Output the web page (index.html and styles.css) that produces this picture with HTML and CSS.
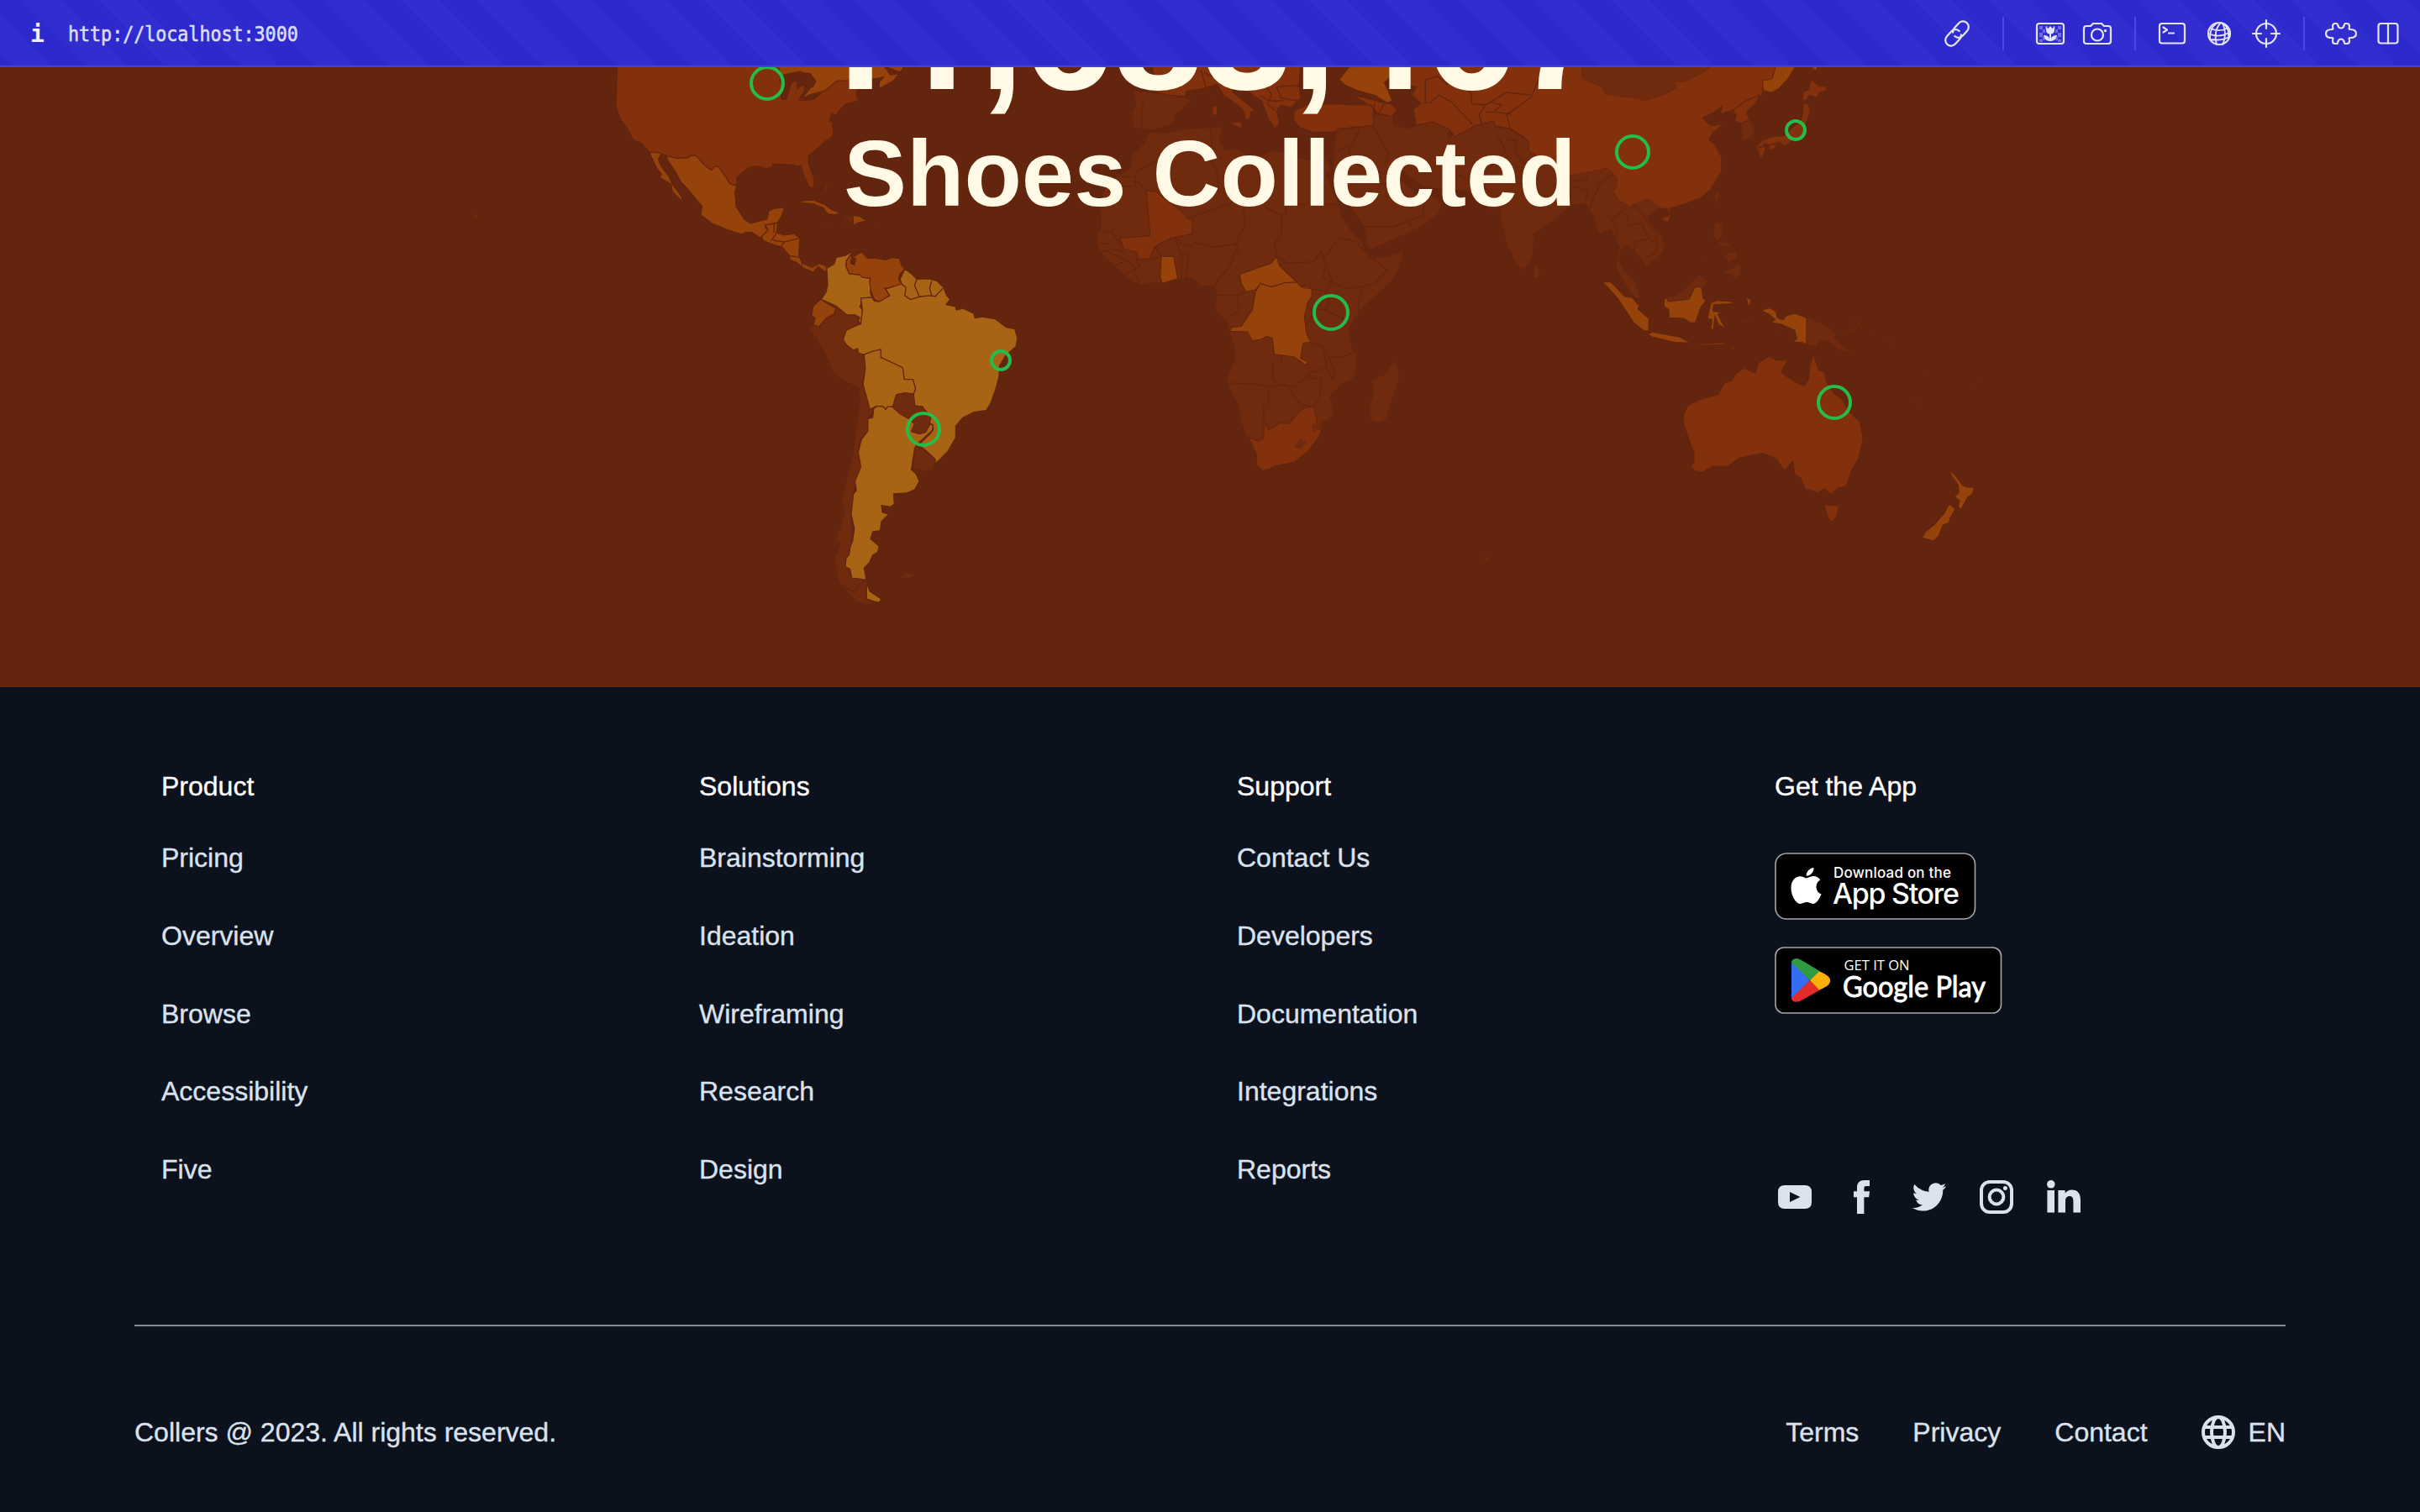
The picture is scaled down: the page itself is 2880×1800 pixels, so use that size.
FILE: index.html
```html
<!DOCTYPE html>
<html lang="en">
<head>
<meta charset="utf-8">
<title>Collers</title>
<link rel="stylesheet" href="styles.css">
</head>
<body>
<header class="bar">
  <span class="bar-info">i</span>
  <span class="bar-url">http://localhost:3000</span>
  <div class="bar-tools">
    <svg class="tool" viewBox="0 0 40 40"><g transform="rotate(42 20 20)"><path d="M15.500 22.300a6.800 6.800 0 0 1-2.300-5V9.500a6.800 6.800 0 0 1 13.600 0v7.800a6.800 6.800 0 0 1-6.800 6.800"/><path d="M24.500 17.700a6.800 6.800 0 0 1 2.300 5v7.800a6.800 6.800 0 0 1-13.600 0v-7.800a6.800 6.800 0 0 1 6.800-6.800"/></g></svg>
    <i class="sep sep-wide"></i>
    <svg class="tool" viewBox="0 0 40 40"><g class="checks"><path d="M7 11h4v4H7zM11 15h3v4h-3zM7 19h4v5H7zM11 24h3v4h-3zM14 11h3v4h-3zM7 27h4v3H7zM29 11h4v4h-4zM26 15h3v4h-3zM29 19h4v5h-4zM26 24h3v4h-3zM23 11h3v3h-3zM29 27h4v3h-4z"/></g><rect x="4" y="8" width="32" height="24" rx="3"/><path class="solid" d="M15 12l2.500 2 2.500-3 2.500 3 2.500-2v4c0 3-2 4-4 4.500V26c1-3 3-4 7-4-1 4-3 7-8 7s-7-3-8-7c4 0 6 1 7 4v-5.500c-2-.5-4-1.500-4-4.500z"/></svg>
    <svg class="tool" viewBox="0 0 40 40"><path d="M7 11h5l3-3h10l3 3h5q3 0 3 3v15q0 3-3 3H7q-3 0-3-3V14q0-3 3-3z"/><circle cx="20" cy="21.500" r="7"/><circle class="solid" cx="29.500" cy="16.500" r="1.700"/></svg>
    <i class="sep"></i>
    <svg class="tool" viewBox="0 0 40 40"><rect x="5" y="8" width="30" height="23.500" rx="3"/><path d="M9.500 12.500l4.500 3-4.500 3M16 19.500h6"/></svg>
    <svg class="tool" viewBox="0 0 40 40"><circle cx="20" cy="20" r="13"/><path class="thin" d="M22 7c-6 6-8 16-5 26M23 7c5 6 5 18 1 26M19 7c-8 3-10 10-10 19M25 8c6 5 7 11 6 17M10 14c7 3 14 3 20-1M7 20c9 4 18 3 26-2M9 27c8 1 16 1 23-3"/></svg>
    <svg class="tool" viewBox="0 0 40 40"><circle cx="20" cy="20" r="12"/><path d="M20 4v10M20 26v10M4 20h10M26 20h10"/></svg>
    <i class="sep"></i>
    <svg class="tool" viewBox="0 0 40 40"><path d="M10 11.500c0-2 1-3.500 3-3.500h2c2 0 0 5.500 5 5.500S23 8 25 8h2c2 0 3 1.500 3 3.500S28.500 15 31 15s7 0 7 5-4.500 5-7 5-1 1.500-1 3.500-1 3.500-3 3.500h-2c-2 0 0-5.500-5-5.500S17 32 15 32h-2c-2 0-3-1.500-3-3.500S11.500 25 9 25s-7 0-7-5 4.500-5 7-5 1-1.500 1-3.500z"/></svg>
    <svg class="tool" viewBox="0 0 40 40"><rect x="8.500" y="8" width="23" height="23.500" rx="3"/><path d="M20 8v23.500"/></svg>
  </div>
</header>

<section class="hero">
  <svg class="map" viewBox="0 80 2880 738">
    <path class="dark" d="M562 256l4-1 3 3-3 2zM1766 662l6 2 2 4-6-1z"/>
    <g transform="translate(700 70) scale(.38265 .43367)">
      <path class="mid" d="M90 20L88 80 86 130 100 165 120 190 140 222 165 232 190 255 250 268 275 273 312 272 316 266 335 266 362 292 383 306 395 295 405 296 432 330 440 343 462 349 463 325 500 298 530 294 550 301 570 299 574 289 635 290 650 296 662 293 670 320 686 350 698 357 703 348 703 328 686 290 685 268 705 252 740 225 758 215 763 205 760 180 765 165 778 145 800 125 845 113 835 105 836 85 838 60 820 20Z"/>
      <path class="orange" d="M590 20H984L950 60 905 82 905 60 885 55 838 60 775 60 760 70 735 88 695 97 665 108 690 80 705 60 690 45 660 35 600 45Z"/>
      <path class="sea" d="M600 48L640 38 690 40 708 62 700 75 690 80 665 105 655 112 675 85 670 70 650 82 650 60 632 65 615 112 600 110 602 80 612 58 595 62ZM920 20L980 40 940 44ZM885 56L920 50 900 68ZM658 115L690 100 725 95 700 112ZM750 170L758 150 770 155 764 175Z"/>
      <path class="orange" d="M190 256L218 258 250 268 275 273 312 272 316 266 335 266 362 292 383 306 395 295 405 296 432 330 440 343 462 349 456 365 460 405 485 440 505 452 530 446 556 440 562 418 578 411 610 408 600 435 588 450 551 456 551 463 560 470 540 487 535 492 510 477 490 476 477 482 430 468 385 452 350 428 354 405 310 358 290 340 268 305 248 280 243 267 225 264 218 275 225 292 250 322 262 345 280 365 293 383 288 388 262 365 258 345 222 325 228 318 212 298Z"/>
      <path class="orange" d="M540 487L560 470 551 456 580 453 590 450 585 478 610 484 640 480 658 492 655 540 665 560 695 573 720 562 738 568 744 580 735 584 715 570 700 586 668 574 650 560 628 552 625 540 605 518 570 508 542 498Z"/>
      <path class="line" d="M578 453V478M585 480L568 500M575 498L610 503 658 492M600 515L612 500M625 540L655 545M665 558V574"/>
      <path class="orange" d="M640 402L665 390 700 388 735 400 755 413 785 424 770 428 745 426 730 408 700 398 665 395ZM823 430L845 433 866 445 840 450 825 457Z"/>
      <path class="dark" d="M790 432L822 432V450L785 448 815 446ZM730 448L758 452 740 455ZM885 449L903 450 890 452ZM735 340L748 345 735 375ZM720 338L730 338 722 343Z"/>
      <path class="dark" d="M720 735L740 710 770 690 772 680 805 703 840 705 848 728 835 732 803 745 793 770 803 785 838 795 840 808 858 812 862 850 855 895 845 905 800 885 760 858 740 815 710 765 690 750 688 735 700 728Z"/>
      <path class="dark" d="M843 905L858 895 876 963 888 965 870 988 870 1022 845 1045 840 1080 848 1120 834 1160 825 1195 818 1250 822 1300 812 1360 800 1372 814 1400 820 1425 865 1430 865 1482 885 1490 865 1500 830 1485 785 1445 775 1420 768 1370 785 1330 770 1322 785 1285 798 1250 790 1210 805 1150 825 1080 835 1000 845 945Z"/>
      <path class="gold" d="M742 575L765 563 772 545 800 540 827 526 818 535 803 555 802 570 812 590 845 593 852 600 878 602 875 612 880 625 877 640 882 655 848 657 849 672 845 680 853 690 848 728 840 720 845 710 830 703 805 703 770 678 725 660 740 640 745 620Z"/>
      <path class="orange" d="M803 555L815 540 830 541 850 530 870 548 890 547 925 552 945 546 968 548 975 568 985 577 970 590 965 605 975 618 960 627 922 630 938 650 920 660 905 667 890 660 880 640 875 612 878 602 852 600 845 593 812 590 802 570Z"/>
      <path class="sea" d="M820 540L832 550 828 566 816 562Z"/>
      <path class="gold" d="M985 577L1005 590 1022 605 1060 604 1085 610 1105 628 1115 650 1125 660 1113 675 1142 680 1145 690 1165 685 1200 700 1203 712 1225 708 1265 714 1300 737 1327 742 1335 768 1330 790 1300 812 1278 845 1278 870 1268 905 1252 945 1238 965 1200 970 1165 985 1143 1008 1143 1040 1118 1078 1090 1103 1078 1112 1080 1100 1050 1075 1028 1060 1065 1028 1073 1018 1072 1005 1062 1000 1066 980 1048 965 1040 955 1016 952 1012 920 1018 905 1010 880 983 880 978 848 940 832 910 820 910 798 885 803 858 812 840 808 838 795 825 800 803 785 793 770 803 745 835 732 848 728 853 690 848 657 882 655 890 665 905 667 938 650 925 632 975 618 970 605Z"/>
      <path class="line" d="M975 618L988 628 985 650 1003 661 1030 653 1060 650 1080 652 1103 630M1022 605L1015 622 1030 653M1068 610L1062 630 1068 650"/>
      <path class="gold" d="M858 812L885 803 910 798 910 820 940 832 978 848 983 880 1010 880 1018 905 1012 920 985 917 958 922 948 953 925 963 918 955 892 955 876 963 865 925 855 895 862 850Z"/>
      <path class="dark" d="M958 922L985 917 1012 920 1016 952 1040 955 1048 968 1066 980 1062 1005 1050 1025 1030 1030 1005 1023 1015 1003 1000 990 970 975 948 955Z"/>
      <path class="gold" d="M888 960L900 953 918 955 925 963 930 955 945 955 970 975 1000 990 1015 1003 1005 1023 1030 1030 1050 1025 1063 1003 1073 1006 1070 1020 1025 1056 1015 1070 1005 1128 1020 1140 1030 1160 1015 1183 990 1192 950 1194 952 1222 940 1230 912 1226 915 1245 935 1250 912 1270 908 1295 885 1298 878 1318 905 1338 900 1355 885 1362 875 1382 858 1398 865 1430 820 1425 814 1400 800 1395 802 1372 812 1360 815 1340 822 1325 828 1290 818 1250 825 1195 834 1185 830 1160 848 1120 840 1080 850 1045 870 1022 870 988 885 985Z"/>
      <path class="dark" d="M1018 1062L1040 1072 1082 1102 1070 1125 1045 1132 1010 1125Z"/>
      <path class="orange" d="M700 680L722 660 770 685 765 700 740 712 718 735 700 730 706 712 695 705Z"/>
      <path class="gold" d="M866 1440L876 1462 912 1483 905 1492 890 1490 866 1482Z"/>
      <path class="line" d="M785 1445L830 1465 835 1450 865 1432"/>
      <path class="dark" d="M970 1425L985 1412 1015 1415 1000 1424Z"/>
    </g>
    <g transform="translate(1280 70) scale(.38265 .33333)">
      <path class="dark" d="M228 262L285 265 340 250 440 245 460 240 455 262 445 290 465 325 500 322 540 350 580 345 610 330 650 335 680 350 720 362 775 355 785 370 795 400 780 410 800 470 820 520 825 560 860 620 890 655 905 690 925 712 960 708 1020 690 1010 740 985 790 940 840 900 880 865 930 848 970 862 1040 873 1060 872 1120 860 1145 830 1160 790 1205 800 1240 802 1275 765 1300 760 1340 725 1400 680 1440 620 1455 585 1472 562 1450 562 1410 535 1355 515 1300 508 1240 480 1180 470 1145 498 1065 490 1010 470 940 432 895 440 840 430 812 390 812 365 782 320 785 270 803 245 798 200 810 150 770 120 740 75 690 65 640 80 600 75 520 100 440 130 420 175 385 175 345 215 300Z"/>
      <path class="mid" d="M220 470L250 475 330 545 350 572 363 572 362 625 300 640 262 660 245 675 228 715 195 715 190 690 150 680 138 640 232 632Z"/>
      <path class="orange" d="M267 706H305L318 785 270 803 263 780ZM510 770L570 745 608 730 625 706 635 740 688 798 660 800 610 815 575 805 560 825 530 832 515 800Z"/>
      <path class="orange" d="M575 802L610 815 650 800 688 798 700 812 725 812 735 825 735 850 722 870 712 920 718 980 732 1012 708 1015 700 1070 720 1080 720 1092 712 1092 680 1065 618 1055 612 998 595 992 575 1003 550 1007 535 975 480 973 485 960 515 955 550 895 560 830Z"/>
      <path class="mid" d="M537 1352L570 1365 585 1355 585 1290 600 1325 635 1300 665 1303 695 1260 720 1243 742 1245 750 1285 752 1320 763 1325 760 1345 725 1400 680 1440 620 1455 585 1472 562 1450 562 1410Z"/>
      <path class="dark" d="M683 1385L700 1357 715 1370 700 1393ZM735 1315L742 1303 755 1318 745 1332ZM992 1078L1008 1130 1000 1160 965 1290 940 1300 920 1290 912 1245 928 1195 922 1150 965 1125Z"/>
      <path class="line" d="M130 422H185V455H130M185 430L220 470M185 425L190 400 280 350M420 245L425 310 400 330 440 400 445 480M350 570L520 500M520 480L525 600 495 660M590 530L640 560V625L618 660 630 706M640 560L655 555V520H820M310 640L330 660 360 670 370 658 430 672 500 662 510 700M318 785L330 785V706L310 640M345 785L350 700 325 690M430 812L450 780 480 740 500 680M440 845H500L530 832M500 845L510 900 470 930M630 710L660 730 740 725 765 685 780 740M650 720L635 740M780 740L800 800 840 820 890 815 930 800 970 755 905 700M780 700L820 640 870 650 900 690M778 745L770 780 800 800 780 830 700 815M780 830L790 870 780 900 835 930M890 815L878 890 885 910M715 960L740 910 725 880M740 895H780M732 1012L770 1030 785 1065 830 1065 868 1048M770 1030L780 1100 800 1145 805 1110 785 1065M780 1105L730 1120 720 1135 765 1145 760 1205 740 1243M720 1135L680 1170 658 1168 700 1235 740 1243M658 1168L615 1150 612 1088 640 1085V1060M470 1157L560 1162 600 1170 658 1165M600 1175V1238L585 1240V1290M75 690L115 680 150 690M75 660L115 662M75 620L110 615 140 660M100 690L160 720 190 750M120 740L160 720M160 770L200 740 190 715M200 810L185 760M228 715L265 708M245 670L267 706"/>
      <path class="dark" d="M180 115L215 118 290 130 345 140 360 150 310 200 300 235 240 255 180 245 175 200 188 160Z"/>
      <path class="mid" d="M240 20H700L695 100 700 140 670 175 640 165 625 185 635 230 620 250 600 215 578 150 540 120 500 80 480 80 490 120 560 185 545 190 545 210 530 220 520 180 460 130 440 90 400 105 345 115 340 135 290 130 215 110 240 90ZM480 228L518 225 515 250ZM425 170L440 165 440 200 427 205ZM430 125L437 122 435 150Z"/>
      <path class="mid" d="M680 185L720 165 800 160 860 165 920 165 930 190 925 238 860 245 800 262 740 262 695 245 678 215ZM860 130L905 140 960 158 980 160 1000 180 985 205 940 195 920 170Z"/>
      <path class="orange" d="M820 75L850 30 975 20 985 60 960 85 975 120 985 150 970 158 930 130 880 115 840 95Z"/>
      <path class="dark" d="M925 240L930 200 985 205 990 235 1030 250 1060 240 1110 225 1160 250 1165 275 1200 262 1240 240 1300 222 1305 245 1345 248 1390 280 1408 295 1410 330 1500 390 1545 410 1568 415 1568 480 1520 540 1490 575 1425 625 1422 700 1408 740 1388 752 1370 735 1345 670 1325 590 1320 530 1290 540 1250 490 1210 470 1130 465 1080 455 1040 420 1000 390 1000 420 1040 460 1060 490 1090 480 1140 515 1130 550 1110 570 1060 610 920 678 908 670 900 600 850 520 815 450 800 400 805 330 810 262 860 245ZM1425 728L1445 755 1440 782 1425 780Z"/>
      <path class="mid" d="M1010 20H1568V415L1500 390 1410 330 1408 295 1390 275 1350 248 1305 240 1300 222 1240 240 1180 278 1160 250 1110 225 1060 238 1050 180 1075 160 1045 130 1060 100 1020 95 1040 60Z"/>
      <path class="line" d="M1088 155V75L1125 62 1155 90 1180 82 1230 120 1232 160 1275 165 1340 120 1420 130 1440 75M1085 158L1105 155 1130 130 1170 155 1235 235M1275 165L1255 200 1265 240M1290 155L1325 165 1300 190 1355 198M1275 190H1300M1420 135L1340 200 1352 245M930 160L925 210M960 160L940 200M810 250L885 245 860 310 810 330M850 320L855 370 960 410M925 240L975 340 960 380M905 600L990 600 1080 560 1085 520M1035 575L1048 610M1160 262L1165 400 1300 480M1270 470L1280 400 1340 330 1310 270M1340 290L1370 290 1365 330 1400 380M390 40L405 100M400 50L440 70M480 80L540 50M590 95L610 130 595 165M625 100L640 140 690 150M625 100L690 95M575 130L600 150 650 150M600 165L620 185M210 140L205 240M480 45L560 60 620 50M705 60L690 100"/>
    </g>
    <g transform="translate(1850 70) scale(.35714 .38265)">
      <path class="mid seamless" d="M-10 20H738L725 62 693 68 690 115 650 122 605 155 555 170 560 145 530 165 490 183 520 210 560 205 530 225 512 250 530 265 555 305 555 350 520 405 490 430 450 445 400 460 385 462 382 478 375 465 330 462 250 460 215 440 195 415 208 395 208 370 195 355 175 340 125 350 60 365 -10 340Z"/>
      <path class="mid" d="M358 495L388 485 380 508 362 505Z"/>
      <path class="dark" d="M90 20H525L500 40 470 55 430 72 400 68 405 90 370 110 300 130 270 122 170 110 155 85 92 62Z"/>
      <path class="orange" d="M738 20H805L780 60 745 95 720 105 695 98 693 68 725 62ZM858 20H875V40L866 32 860 42Z"/>
      <path class="mid" d="M595 160L640 130 685 112 668 140 640 165 650 190 620 200 600 195 605 178Z"/>
      <path class="dark" d="M622 200L650 190 667 215 660 243 625 257ZM530 430L552 408 540 450Z"/>
      <path class="mid" d="M855 62L880 85 907 85 905 98 885 105 872 122 850 112 840 130 825 130 830 102 848 95ZM828 138L845 140 853 165 838 200 832 240 800 250 765 272 750 258 715 270 700 262 690 275 665 280 690 255 730 240 765 240 790 215 820 195 828 165ZM670 278L700 270 703 285 688 312 680 290ZM713 270L740 262 735 280 715 285Z"/>
      <path class="dark" d="M0 430L55 455 20 480 0 495ZM55 362L125 350 175 340 208 370 208 395 195 415 215 440 250 460 310 435 350 460 312 495 330 525 360 555 367 590 355 610 305 645 290 620 265 600 240 580 225 590 215 630 235 665 265 690 288 748 265 740 235 700 205 650 215 590 190 530 145 545 130 490 105 450 55 455Z"/>
      <path class="line" d="M60 378H105L108 362M55 395L110 410 105 440M115 465L150 390 190 360M240 465L190 500 210 540 205 570 222 600M240 480L245 520 290 510 312 560 270 570 265 600M260 450L300 490 340 550 340 600 305 620M312 560L340 570"/>
      <path class="dark" d="M535 508L562 512 560 545 545 570 580 575 590 590 550 580 528 548ZM560 610L605 600 610 620 580 635ZM560 665L618 638 622 670 605 688 590 670ZM492 643L520 616 505 636ZM372 742L400 738 440 715 482 672 510 695 495 712 468 710 448 748 380 755Z"/>
      <path class="orange" d="M160 693L188 695 235 740 258 742 282 768 278 778 315 808 314 847 297 846 265 822 235 780 210 745ZM312 857L325 850 385 860 415 865 455 884 400 882 325 865ZM372 742L380 755 448 748 468 710 490 710 495 745 505 752 488 772 470 820 455 822 430 808 382 806 380 780 365 770 365 750Z"/>
      <path class="orange" d="M520 760L540 752 595 755 602 747 590 762 530 765 528 785 550 788 570 780 545 795 558 820 572 840 545 825 535 800 530 843 520 840 525 812 510 808ZM638 742L655 750 648 775ZM648 809L685 812 685 815 650 813ZM482 888L567 883 565 889 485 892ZM515 902L537 906 530 909ZM580 908L595 895 602 900ZM738 848L746 850 741 860ZM620 814H634V818H622Z"/>
      <path class="orange" d="M688 782L715 775 738 785 742 805 760 812 775 798 800 792 840 806 840 890 825 882 793 882 808 870 800 845 755 826 720 820 735 812 715 795Z"/>
      <path class="dark" d="M841 806L895 824 940 853 930 865 988 914 945 905 910 877 880 880 870 895 841 890ZM952 845L985 846 1010 828 1005 840 980 853ZM988 805L1020 822 1015 828ZM1045 845L1062 860 1052 857ZM600 895L632 884 610 890ZM1105 875L1120 882 1115 884ZM1120 898L1133 902 1125 904ZM1186 1050L1228 1083 1215 1080ZM1383 1018L1403 1017 1393 1025ZM1405 1003L1425 995 1412 1006ZM1225 975L1232 985 1226 985Z"/>
      <path class="mid" d="M862 918L880 968 900 975 905 1003 930 1040 955 1055 985 1100 1018 1130 1028 1180 1015 1240 990 1280 972 1330 945 1335 920 1355 900 1337 880 1350 835 1338 820 1305 800 1293 795 1250 765 1282 740 1245 695 1227 650 1235 615 1242 580 1267 525 1268 495 1286 470 1283 453 1268 465 1255 465 1225 450 1190 430 1135 430 1105 445 1078 490 1058 545 1045 565 1010 590 1000 605 978 632 962 668 977 680 945 715 925 740 937 778 938 755 975 800 1005 830 1018 845 1000 852 950ZM898 1388L948 1390 942 1420 925 1440 912 1430Z"/>
      <path class="orange" d="M1315 1278L1335 1295 1358 1325 1375 1333 1400 1332 1392 1355 1378 1362 1355 1402 1345 1395 1350 1375 1333 1362 1347 1350 1345 1325 1325 1300ZM1315 1385L1336 1400 1318 1430 1315 1445 1295 1450 1280 1485 1262 1500 1225 1490 1235 1472 1265 1450 1298 1415Z"/>
    </g>
    <g class="rings">
      <circle cx="913" cy="99" r="19"/><circle cx="1191" cy="429" r="11"/><circle cx="1099" cy="511" r="19"/><circle cx="1584" cy="372" r="20"/><circle cx="1943" cy="181" r="19"/><circle cx="2137" cy="155" r="11"/><circle cx="2183" cy="479" r="19"/>
    </g>
  </svg>
  <div class="hero-text">
    <div class="count"><span class="one">1</span><span class="one">1</span>,683,467</div>
    <div class="label">Shoes Collected</div>
  </div>
</section>

<footer class="footer">
  <div class="columns">
    <div class="col"><h3>Product</h3><a>Pricing</a><a>Overview</a><a>Browse</a><a>Accessibility</a><a>Five</a></div>
    <div class="col"><h3>Solutions</h3><a>Brainstorming</a><a>Ideation</a><a>Wireframing</a><a>Research</a><a>Design</a></div>
    <div class="col"><h3>Support</h3><a>Contact Us</a><a>Developers</a><a>Documentation</a><a>Integrations</a><a>Reports</a></div>
    <div class="col">
      <h3>Get the App</h3>
      <svg class="badge apple" viewBox="0 0 240 80" width="240" height="80">
        <rect class="plate" x="1" y="1" width="237.500" height="78" rx="13"/>
        <path class="white" d="M46.500 18c.4 4.800-4.200 10-8.800 9.800-.5-4.600 4-9.400 8.800-9.800zM37.500 30.500c2 0 4.500-2.400 8.500-2.400 3.500 0 6.400 1.700 8.200 4.300-7 4.200-5.800 14.300 1.300 17.200-1.600 4.300-5.200 10.900-9.300 11.300-3 .2-4.500-1.800-8-1.800s-5 1.800-8 1.900c-4.600.1-10.700-9.600-10.700-19 0-9 5.500-13.600 10.700-13.700 3.100 0 5.600 2.200 7.300 2.200z"/>
        <text class="inter small" x="70" y="29.500" textLength="140">Download on the</text>
        <text class="inter big" x="69" y="60.500" textLength="151">App Store</text>
      </svg>
      <svg class="badge google" viewBox="0 0 272 80" width="272" height="80">
        <rect class="plate" x="1" y="1" width="268.500" height="78" rx="10"/>
        <clipPath id="tri"><path d="M20 20q0-6 6-6l4 1L62 34q5 3.500 4 8-1 3-4 5L30 65q-10 3-10-5z"/></clipPath>
        <g clip-path="url(#tri)"><path fill="#346cf3" d="M18 15L42 40 18 65z"/><path fill="#2f9b41" d="M18 17V10H35L60 24 42 40z"/><path fill="#e32b29" d="M18 63V70H35L60 58 42 40z"/><path fill="#fbb009" d="M53 29.500L42 40 53 51.500 72 45V35z"/></g>
        <text class="open small" x="82.500" y="27.500" textLength="78" lengthAdjust="spacingAndGlyphs">GET IT ON</text>
        <text class="lato big" x="81" y="59.500" textLength="170" lengthAdjust="spacingAndGlyphs">Google Play</text>
      </svg>
      <div class="social">
        <svg viewBox="0 0 24 24"><path fill-rule="evenodd" d="M6 5h12q4 0 4 4v6q0 4-4 4H6q-4 0-4-4V9q0-4 4-4zM9 9v6l6.200-3z"/></svg>
        <svg viewBox="0 0 24 24"><path d="M16.500 5.500h-2c-.9 0-1.300.4-1.300 1.200v1.900h3.300l-.4 3.500h-2.900V22H9v-9.900H7V8.600h2V6.400C9 3.400 10.600 2 13.400 2h3.100z"/></svg>
        <svg viewBox="0 0 24 24"><path d="M22.162 5.656a8.384 8.384 0 0 1-2.402.658A4.196 4.196 0 0 0 21.600 4c-.82.488-1.719.83-2.656 1.015a4.182 4.182 0 0 0-7.126 3.814 11.874 11.874 0 0 1-8.620-4.370 4.168 4.168 0 0 0-.566 2.103c0 1.450.738 2.731 1.860 3.481a4.168 4.168 0 0 1-1.894-.523v.052a4.185 4.185 0 0 0 3.355 4.101 4.210 4.210 0 0 1-1.890.072A4.185 4.185 0 0 0 7.970 16.650a8.394 8.394 0 0 1-6.191 1.732 11.830 11.830 0 0 0 6.410 1.880c7.693 0 11.900-6.373 11.900-11.900 0-.18-.005-.362-.013-.54a8.496 8.496 0 0 0 2.087-2.165z"/></svg>
        <svg viewBox="0 0 24 24"><g class="ring"><rect x="3" y="3" width="18" height="18" rx="5"/><circle cx="12" cy="12" r="4.200"/></g><circle cx="17.200" cy="6.800" r="1.250"/></svg>
        <svg viewBox="0 0 24 24"><circle cx="4.400" cy="4.400" r="2.400"/><path d="M2.200 8h4.300v13.200H2.200zM8.700 8h4.100v1.800c.8-1.300 2.200-2.100 4-2.100 3.600 0 5.200 2.200 5.200 6.100v7.400h-4.300v-6.800c0-1.900-.7-2.900-2.200-2.900-1.700 0-2.500 1.100-2.500 3v6.700H8.700z"/></svg>
      </div>
    </div>
  </div>
  <div class="legal">
    <span>Collers @ 2023. All rights reserved.</span>
    <nav><a>Terms</a><a>Privacy</a><a>Contact</a>
      <span class="lang"><svg viewBox="0 0 24 24"><circle cx="12" cy="12" r="9"/><ellipse cx="12" cy="12" rx="4" ry="9"/><path d="M3.500 9h17M3.500 15h17"/></svg>EN</span>
    </nav>
  </div>
</footer>
</body>
</html>
```
FILE: styles.css
```css
* { box-sizing: border-box; }
body {
  margin: 0;
  width: 2880px;
  height: 1800px;
  overflow: hidden;
  display: flex;
  flex-direction: column;
  background: #0c121d;
  color: #dbe2ee;
  font: 32px/48px "Liberation Sans", Arial, sans-serif;
}

/* Top bar */
.bar {
  height: 80px;
  flex: none;
  display: flex;
  align-items: center;
  padding: 0 18px 0 36px;
  border-bottom: 2px solid #4640d6;
  background: repeating-linear-gradient(45deg, #2e29cd 0 11.3px, #322dce 11.3px 43.1px, #2e29cd 43.1px 63.64px);
  color: #dcdcf8;
  font-family: "DejaVu Sans Mono", "Liberation Mono", monospace;
}
.bar-info { width: 45px; padding-top: 3px; font-size: 28px; font-weight: 700; color: #efeffd; }
.bar-url {
  padding-top: 3px;
  font-size: 24px;
  transform: scaleX(.902);
  transform-origin: 0 50%;
  -webkit-text-stroke: .6px currentColor;
}
.bar-tools { margin-left: auto; padding-top: 1px; display: flex; align-items: center; }
.tool {
  width: 40px;
  height: 40px;
  margin-right: 16px;
  fill: none;
  stroke: #e4e4fb;
  stroke-width: 2.2;
  stroke-linecap: round;
  stroke-linejoin: round;
}
.tool:last-child { margin-right: 0; }
.tool .solid { fill: #e4e4fb; stroke: none; }
.tool .thin { stroke-width: 1.8; }
.checks { fill: #6f6be0; stroke: none; }
.sep { width: 2px; height: 40px; margin: 0 23px 0 8px; background: #4b47e6; }
.sep-wide { margin: 0 35px 0 18px; }

/* Hero with world map */
.hero {
  position: relative;
  height: 738px;
  flex: none;
  overflow: hidden;
  background: #63250e;
}
.map { position: absolute; inset: 0; width: 2880px; height: 738px; }
.map path { stroke: #63250e; stroke-width: 1.2; vector-effect: non-scaling-stroke; stroke-linejoin: round; }
.map .dark { fill: #702b0e; stroke-width: .6; }
.mid { fill: #82310c; }
.orange { fill: #96420b; }
.gold { fill: #a86414; }
.sea { fill: #63250e; }
.map .line { fill: none; stroke-width: 1.4; }
.map .seamless { stroke: none; }
.rings { fill: none; stroke: #24bc4b; stroke-width: 4; }
.hero-text {
  position: relative;
  display: flex;
  flex-direction: column;
  align-items: center;
  margin-top: -136px;
  color: #fff9e6;
  font-weight: 700;
}
.count { height: 192px; padding-right: 8px; font-size: 192px; line-height: 192px; letter-spacing: -.4px; }
.one { display: inline-block; width: 97px; font-family: Roboto, sans-serif; line-height: 1; }
.one + .one { width: 106px; }
.label { font-size: 112px; line-height: 112px; margin-top: 15px; }

/* Footer */
.footer { flex: 1; padding: 94px 160px 0; -webkit-text-stroke: .35px currentColor; }
.columns { display: grid; grid-template-columns: repeat(4, 640px); height: 665px; padding-left: 32px; }
.col { display: flex; flex-direction: column; align-items: flex-start; }
.col h3 { margin: 0 0 37px; font-size: 32px; font-weight: 400; color: #fff; }
.col a { margin-bottom: 44.75px; }
.badge { display: block; -webkit-text-stroke: 0; }
.apple { margin-top: 18px; }
.google { margin-top: 32px; }
.plate { fill: #000; stroke: #a6a6a6; stroke-width: 1.6; }
.white, .badge text { fill: #fff; }
.inter { font-family: Inter, sans-serif; font-weight: 500; }
.open { font-family: "Open Sans", sans-serif; }
.lato { font-family: Lato, sans-serif; font-weight: 400; stroke: #fff; stroke-width: .9; }
.badge .small { font-size: 17px; }
.badge .big { font-size: 34px; }
.social { display: flex; gap: 32px; margin-top: 194px; }
.social svg { width: 48px; height: 48px; fill: #dbe2ee; }
.social .ring { fill: none; stroke: #dbe2ee; stroke-width: 2; }
.legal {
  display: flex;
  justify-content: space-between;
  align-items: flex-start;
  border-top: 2px solid #858a93;
  padding-top: 102px;
}
.legal nav { display: flex; gap: 64px; }
.lang { display: flex; align-items: center; gap: 12px; margin-left: -4px; }
.lang svg { width: 48px; height: 48px; fill: none; stroke: #dbe2ee; stroke-width: 2; }
```
